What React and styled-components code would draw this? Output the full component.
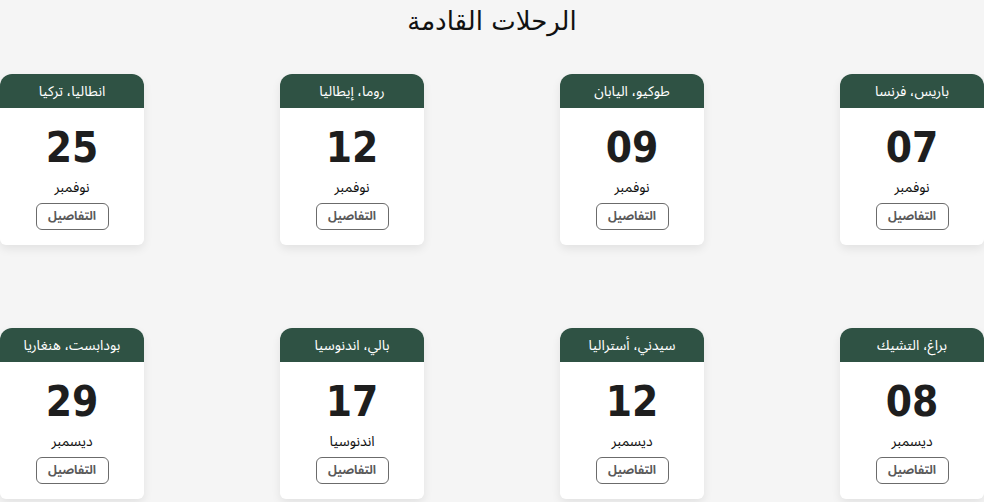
import React from 'react';
import styled, { createGlobalStyle } from 'styled-components';

const GlobalStyle = createGlobalStyle`
  html, body {
    margin: 0;
    padding: 0;
    background: #f5f5f5;
    font-family: "DejaVu Sans", "Noto Sans", sans-serif;
  }
`;

const Page = styled.main`
  direction: rtl;
  width: 984px;
  height: 502px;
  overflow: hidden;
`;

const Title = styled.h1`
  margin: 0;
  padding-top: 4px;
  height: 70px;
  text-align: center;
  font-size: 26px;
  font-weight: normal;
  color: #111;
  line-height: 34px;
`;

const Grid = styled.section`
  display: grid;
  grid-template-columns: repeat(4, 144px);
  justify-content: space-between;
  row-gap: 83px;
`;

const Card = styled.article`
  background: #fff;
  border-radius: 12px 12px 6px 6px;
  box-shadow: 0 4px 10px rgba(0, 0, 0, 0.08);
  height: 171px;
  display: flex;
  flex-direction: column;
  overflow: hidden;
`;

const CardHead = styled.header`
  background: #2f5244;
  color: #fff;
  height: 34px;
  display: flex;
  align-items: center;
  justify-content: center;
  font-family: "Noto Sans Arabic", "Noto Sans Arabic UI", "Noto Sans", sans-serif;
  font-size: 14px;
`;

const CardBody = styled.div`
  display: flex;
  flex-direction: column;
  align-items: center;
  padding-top: 14px;
`;

const Day = styled.div`
  font-family: "DejaVu Sans Condensed", "DejaVu Sans", sans-serif;
  font-weight: bold;
  font-size: 42px;
  line-height: 52px;
  color: #1e1e1e;
  direction: ltr;
`;

const Month = styled.div`
  font-family: "Noto Sans Arabic", "Noto Sans Arabic UI", "Noto Sans", sans-serif;
  font-size: 14px;
  line-height: 16px;
  margin-top: 6px;
  color: #111;
`;

const DetailsButton = styled.button`
  margin-top: 7px;
  width: 73px;
  height: 27px;
  border: 1px solid #6b6b6b;
  border-radius: 6px;
  background: #fff;
  color: #5a5a5a;
  font-family: "Noto Sans Arabic", "Noto Sans Arabic UI", "Noto Sans", sans-serif;
  font-size: 12px;
  font-weight: bold;
  padding: 0;
  cursor: pointer;
`;

const trips = [
  { place: 'باريس، فرنسا', day: '07', month: 'نوفمبر' },
  { place: 'طوكيو، اليابان', day: '09', month: 'نوفمبر' },
  { place: 'روما، إيطاليا', day: '12', month: 'نوفمبر' },
  { place: 'انطاليا، تركيا', day: '25', month: 'نوفمبر' },
  { place: 'براغ، التشيك', day: '08', month: 'ديسمبر' },
  { place: 'سيدني، أستراليا', day: '12', month: 'ديسمبر' },
  { place: 'بالي، اندنوسيا', day: '17', month: 'اندنوسيا' },
  { place: 'بودابست، هنغاريا', day: '29', month: 'ديسمبر' },
];

export default function App() {
  return (
    <Page>
      <GlobalStyle />
      <Title>الرحلات القادمة</Title>
      <Grid>
        {trips.map((t, i) => (
          <Card key={i}>
            <CardHead>{t.place}</CardHead>
            <CardBody>
              <Day>{t.day}</Day>
              <Month>{t.month}</Month>
              <DetailsButton>التفاصيل</DetailsButton>
            </CardBody>
          </Card>
        ))}
      </Grid>
    </Page>
  );
}
